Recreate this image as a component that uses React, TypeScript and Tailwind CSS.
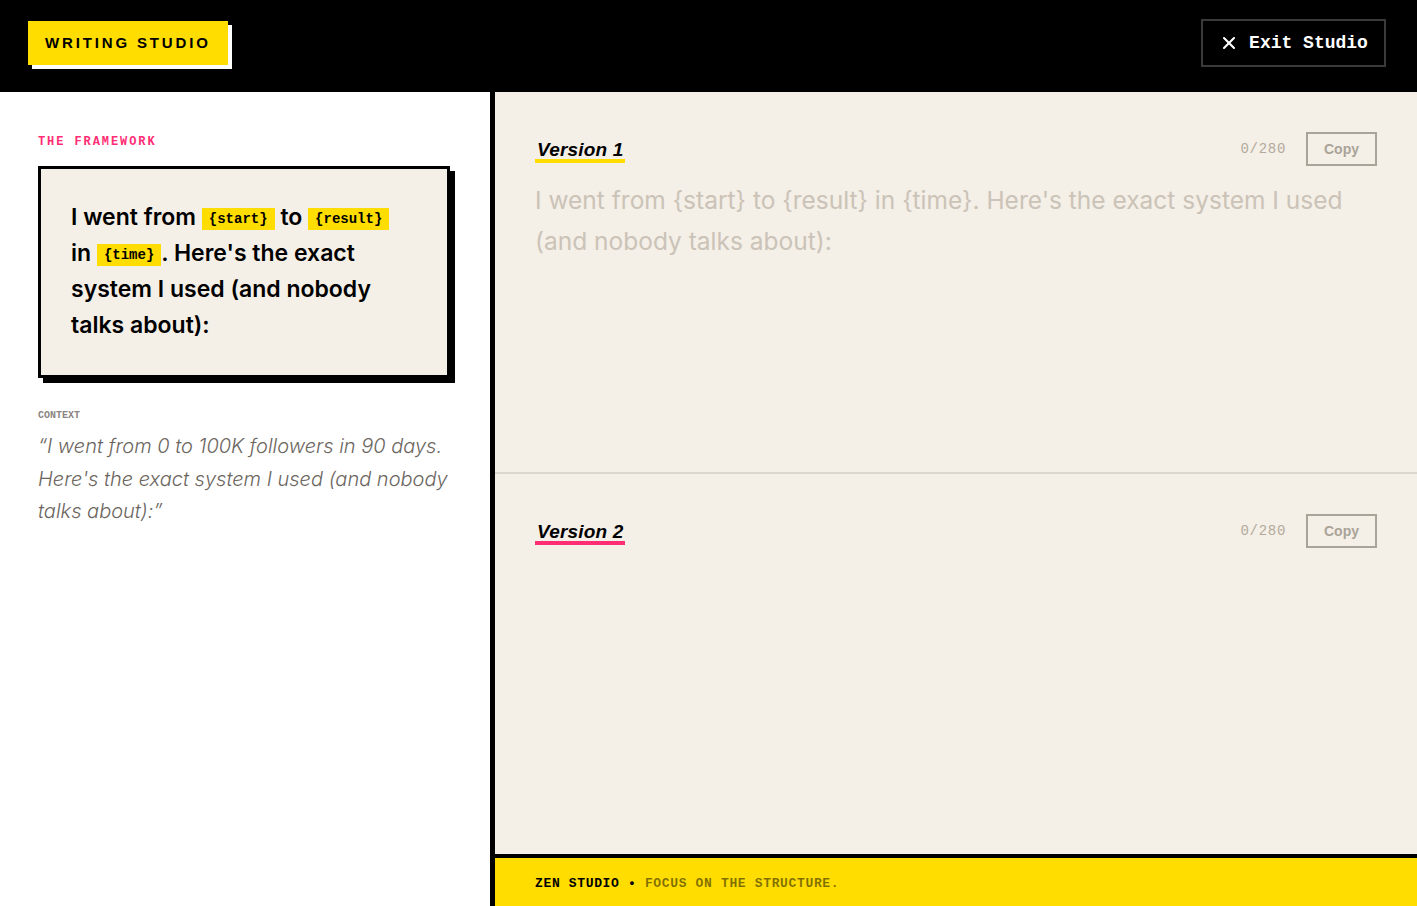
import React from 'react';
import { X } from 'lucide-react';

const mono = "font-['Liberation_Mono',monospace]";
const sans = "font-['Inter','Noto_Sans',sans-serif]";
const heavy = "font-['Liberation_Sans',Arial,sans-serif]";

const Chip: React.FC<{ children: React.ReactNode }> = ({ children }) => (
  <span
    className={`${mono} inline-block bg-[#ffdd00] px-[7px] py-[3px] align-[2px] text-[14px] leading-[16px] font-bold`}
  >
    {children}
  </span>
);

interface VersionProps {
  label: string;
  accent: string;
  placeholder?: string;
  divider?: boolean;
}

const VersionPanel: React.FC<VersionProps> = ({ label, accent, placeholder, divider }) => (
  <section
    className={`flex flex-1 flex-col px-10 pt-10 pb-6 ${divider ? 'border-b-2 border-[#ddd6cc]' : ''}`}
  >
    <div className="flex items-center justify-between">
      <h2
        className={`${heavy} mt-[4px] border-b-4 ${accent} pl-[2px] pr-[1px] text-[19px] leading-[19px] font-black tracking-[0.01em] text-black italic`}
      >
        {label}
      </h2>
      <div className="flex items-center gap-5">
        <span className={`${mono} text-[14px] tracking-[0.05em] text-[#b3aa9c]`}>0/280</span>
        <button
          className={`${heavy} h-[34px] w-[71px] border-2 border-[#aaa398] text-[14px] font-bold text-[#aaa398]`}
        >
          Copy
        </button>
      </div>
    </div>
    <textarea
      className={`${sans} mt-[14px] w-full flex-1 resize-none bg-transparent text-[24.5px] leading-[41px] text-black outline-none placeholder:text-[#cbc3b7]`}
      placeholder={placeholder}
    />
  </section>
);

export default function App() {
  const prompt =
    "I went from {start} to {result} in {time}. Here's the exact system I used (and nobody talks about):";

  return (
    <div className="flex h-[906px] w-full flex-col overflow-hidden bg-white">
      {/* Top bar */}
      <header className="flex h-[92px] shrink-0 items-center justify-between bg-black pr-[31px] pb-[6px] pl-[28px]">
        <div className="bg-[#ffdd00] px-[17px] py-[13px] shadow-[4px_4px_0_#fff]">
          <span
            className={`${heavy} block text-[15px] leading-[18px] font-black tracking-[0.19em] text-black`}
          >
            WRITING STUDIO
          </span>
        </div>
        <button
          className={`${mono} flex h-[48px] w-[185px] items-center justify-center gap-[10px] border-2 border-[#3a3a3a] text-[18px] font-bold text-white`}
        >
          <X size={20} strokeWidth={2.5} />
          Exit Studio
        </button>
      </header>

      <div className="flex min-h-0 flex-1">
        {/* Framework sidebar */}
        <aside className="w-[495px] shrink-0 border-r-[5px] border-black px-[38px] pt-[42px]">
          <p className={`${mono} text-[12px] leading-4 font-bold tracking-[0.16em] text-[#ff2e74]`}>
            THE FRAMEWORK
          </p>
          <div className="mt-[16px] mr-[2px] border-[3px] border-black bg-[#f4efe7] pt-[30px] pr-[38px] pb-[32px] pl-[30px] shadow-[5px_5px_0_#000]">
            <p className={`${sans} text-[23px] leading-[36px] font-semibold text-black`}>
              <span>I went from</span> <Chip>{'{start}'}</Chip> <span>to</span>{' '}
              <Chip>{'{result}'}</Chip> <span>in</span> <Chip>{'{time}'}</Chip>
              <span>. Here's the exact</span> <span>system I used (and nobody talks about):</span>
            </p>
          </div>
          <p className={`${mono} mt-8 text-[10px] leading-3 font-bold text-[#8a8580]`}>CONTEXT</p>
          <p className={`${sans} mt-2 text-[20px] leading-[32.5px] font-light text-[#6b6660] italic`}>
            “I went from 0 to 100K followers in 90 days. Here's the exact system I used (and nobody
            talks about):”
          </p>
        </aside>

        {/* Drafting area */}
        <main className="flex min-w-0 flex-1 flex-col bg-[#f4efe7]">
          <VersionPanel label="Version 1" accent="border-[#ffdd00]" placeholder={prompt} divider />
          <VersionPanel label="Version 2" accent="border-[#ff2e74]" />
          <footer className="flex h-[52px] shrink-0 items-center border-t-4 border-black bg-[#ffdd00] px-10 pt-1">
            <span className={`${mono} text-[13px] font-bold tracking-[0.05em] text-black`}>
              ZEN STUDIO •{' '}
              <span className="text-black/50">FOCUS ON THE STRUCTURE.</span>
            </span>
          </footer>
        </main>
      </div>
    </div>
  );
}
